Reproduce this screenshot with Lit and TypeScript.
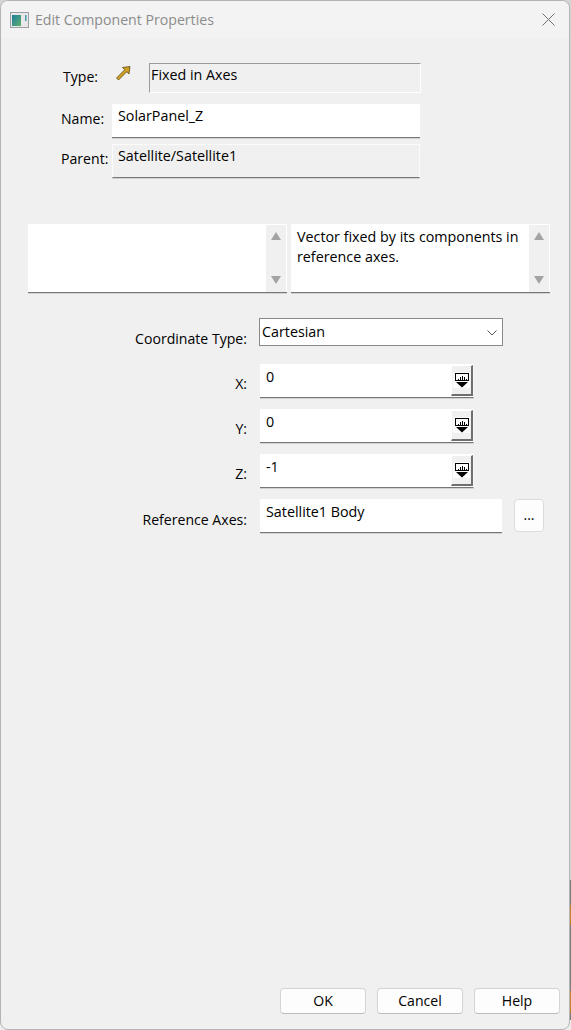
import { LitElement, html, css, svg } from "lit";
import { customElement } from "lit/decorators.js";

const spinIcon = html`<svg class="spin-icon" viewBox="0 0 17 16" width="17" height="16" shape-rendering="crispEdges">
  <rect x="0" y="0" width="17" height="16" fill="#ffffff" fill-opacity="0.75"/>
  ${svg`<path d="M2 1.5H15.5M2.5 1V8.5M15.5 1V8.5M2 8.5H16" stroke="#000" fill="none"/>
  <path d="M5.5 8V6.5M7.5 8V5M9.5 8V3.5M11.5 8V5M13.5 8V6.5" stroke="#000" fill="none"/>
  <path d="M3 10H15L9 15.5Z" fill="#000" shape-rendering="auto"/>`}
</svg>`;

const arrowIcon = html`<svg class="arrow" viewBox="0 0 16 17" width="16" height="17">
  <path d="M15 1.5L7.5 2.5L9.8 4.7L1.5 13L3.5 15L11.8 6.7L14 9Z" fill="#cfa024" stroke="#5f4a10" stroke-width="0.8"/>
</svg>`;

const appIcon = html`<svg class="app-icon" viewBox="0 0 19 16" width="19" height="16">
  <defs><linearGradient id="g" x1="0" y1="0" x2="1" y2="1"><stop offset="0" stop-color="#1f7ea0"/><stop offset="1" stop-color="#5fae6a"/></linearGradient></defs>
  <rect x="0.5" y="0.5" width="18" height="15" fill="#e8e8e8" stroke="#9aa0a6"/>
  <rect x="2" y="3" width="9" height="11" fill="url(#g)"/>
  <rect x="15" y="3" width="1.5" height="6" fill="#4a9bb0"/>
</svg>`;

const closeIcon = html`<svg viewBox="0 0 13 13" width="13" height="13" class="close">
  <path d="M0.5 0.5L12.5 12.5M12.5 0.5L0.5 12.5" stroke="#6f6f6f" stroke-width="1" fill="none"/>
</svg>`;

const chevron = html`<svg viewBox="0 0 10 6" width="10" height="6" class="chev">
  <path d="M0.5 0.5L5 5L9.5 0.5" stroke="#555" stroke-width="1" fill="none"/>
</svg>`;

const scrollbar = html`<div class="sb">
  <svg viewBox="0 0 10 8" width="10" height="8"><path d="M5 0L10 8H0Z" fill="#a3a3a3"/></svg>
  <svg viewBox="0 0 10 8" width="10" height="8"><path d="M0 0H10L5 8Z" fill="#a3a3a3"/></svg>
</div>`;

@customElement("app-root")
export class AppRoot extends LitElement {
  static styles = css`
    :host {
      display: block;
      width: 571px;
      height: 1030px;
      background: linear-gradient(
        to bottom,
        #d4d4d4 0 880px,
        #7a7a7a 880px 905px,
        #c8842a 905px 925px,
        #7a7a7a 925px 991px,
        #c8842a 991px 1013px,
        #7a7a7a 1013px 1020px,
        #eeeeee 1020px
      );
      font-family: "Open Sans", "Noto Sans", sans-serif;
      font-size: 14.1px;
      color: #000;
      overflow: hidden;
    }
    .window {
      box-sizing: border-box;
      width: 570px;
      height: 1030px;
      background: #f0f0f0;
      border: 1px solid #b4b4b4;
      border-radius: 8px;
      display: flex;
      flex-direction: column;
      overflow: hidden;
    }
    .title {
      height: 37px;
      flex: none;
      background: #f3f3f3;
      display: flex;
      align-items: center;
      padding: 0 14px 0 9px;
      color: #8c8c8c;
      font-size: 14.15px;
    }
    .app-icon { margin-right: 6px; }
    .close { margin-left: auto; }
    .content {
      flex: 1;
      display: flex;
      flex-direction: column;
      padding: 25px 0 15px 0;
    }
    .top {
      display: flex;
      flex-direction: column;
    }
    .row { display: flex; }
    .lbl { white-space: nowrap; }
    .type-row { height: 30px; padding-left: 62px; }
    .type-row .lbl { width: 52px; padding-top: 4px; }
    .arrow { margin-top: 2px; }
    .arrow-cell { width: 34px; flex: none; }
    .sunk {
      box-sizing: border-box;
      width: 272px;
      height: 30px;
      border: 1px solid #fff;
      border-top-color: #9a9a9a;
      border-left-color: #9a9a9a;
      padding-left: 1px;
      line-height: 21px;
      font-size: 14.3px;
    }
    .name-row { height: 34px; margin-top: 11px; padding-left: 60px; }
    .parent-row { height: 34px; margin-top: 6px; padding-left: 60px; }
    .name-row .lbl, .parent-row .lbl { width: 51px; padding-top: 5px; }
    .edit {
      box-sizing: border-box;
      height: 34px;
      background: #fff;
      border-bottom: 1px solid #777;
      box-shadow: 0 1px 0 #d2d2d2;
      padding-left: 6px;
      line-height: 24px;
      font-size: 14.3px;
    }
    .name-row .edit, .parent-row .edit { width: 308px; }
    .ro {
      background: #f0f0f0;
      border: 1px solid #fbfbfb;
      border-bottom-color: #777;
      padding-left: 5px;
      line-height: 22px;
    }
    .desc-row {
      display: flex;
      gap: 4px;
      margin-top: 46px;
      padding-left: 27px;
    }
    .desc {
      box-sizing: border-box;
      width: 259px;
      height: 69px;
      background: #fff;
      border-bottom: 1px solid #777;
      box-shadow: 0 1px 0 #d2d2d2;
      display: flex;
    }
    .desc-text {
      flex: 1;
      padding: 3px 0 0 6px;
      line-height: 20px;
      font-size: 14.3px;
    }
    .sb {
      box-sizing: border-box;
      width: 20px;
      height: 67px;
      margin: 1px 1px 0 0;
      background: #f0f0f0;
      display: flex;
      flex-direction: column;
      justify-content: space-between;
      align-items: center;
      padding: 7px 1px 8px 0;
    }
    .form {
      display: flex;
      flex-direction: column;
      margin-top: 25px;
    }
    .frow { display: flex; height: 28px; }
    .frow .lbl {
      width: 246px;
      flex: none;
      text-align: right;
      padding-top: 11px;
    }
    .select {
      box-sizing: border-box;
      width: 244px;
      height: 28px;
      margin-left: 12px;
      background: #fff;
      border: 1px solid #8a8a8a;
      display: flex;
      align-items: center;
      justify-content: space-between;
      padding: 0 5px 2px 2px;
      font-size: 14.3px;
    }
    .chev { margin-top: 3px; }
    .num {
      margin-top: 11px;
      height: 34px;
    }
    .num.first { margin-top: 18px; }
    .num .lbl { padding-top: 10px; }
    .num-field {
      box-sizing: border-box;
      width: 214px;
      height: 34px;
      margin-left: 13px;
      position: relative;
      background: #fff;
      border-bottom: 1px solid #777;
      box-shadow: 0 1px 0 #d2d2d2;
      border-right: 1px solid #f8f8f8;
      padding-left: 6px;
      line-height: 26px;
      font-size: 14.3px;
    }
    .spin {
      position: absolute;
      right: 0;
      top: 1px;
      box-sizing: border-box;
      width: 22px;
      height: 31px;
      background: #f0f0f0;
      border-top: 1px solid #fff;
      border-left: 1px solid #fff;
      border-right: 2px solid #6f6f6f;
      border-bottom: 2px solid #6f6f6f;
      display: flex;
      align-items: flex-start;
      justify-content: center;
      padding-top: 6px;
    }
    .ref-field { width: 242px; margin-left: 13px; line-height: 26px; }
    .ref { margin-top: 11px; height: 34px; }
    .ref .lbl { padding-top: 11px; }
    .dots {
      box-sizing: border-box;
      width: 30px;
      height: 33px;
      margin-left: 12px;
      background: #fdfdfd;
      border: 1px solid #dcdcdc;
      border-radius: 4px;
      display: flex;
      align-items: center;
      justify-content: center;
      padding-bottom: 2px;
    }
    .footer {
      margin-top: auto;
      display: flex;
      justify-content: flex-end;
      gap: 11px;
      padding-right: 9px;
    }
    .btn {
      box-sizing: border-box;
      width: 86px;
      height: 26px;
      background: #fdfdfd;
      border: 1px solid #d4d4d4;
      border-bottom-color: #bdbdbd;
      border-radius: 4px;
      display: flex;
      align-items: center;
      justify-content: center;
      padding-bottom: 1px;
    }
  `;

  render() {
    return html`<div class="window">
      <div class="title">${appIcon}<span>Edit Component Properties</span>${closeIcon}</div>
      <div class="content">
        <div class="top">
          <div class="row type-row">
            <div class="lbl">Type:</div>
            <div class="arrow-cell">${arrowIcon}</div>
            <div class="sunk">Fixed in Axes</div>
          </div>
          <div class="row name-row">
            <div class="lbl">Name:</div>
            <div class="edit">SolarPanel_Z</div>
          </div>
          <div class="row parent-row">
            <div class="lbl">Parent:</div>
            <div class="edit ro">Satellite/Satellite1</div>
          </div>
        </div>
        <div class="desc-row">
          <div class="desc"><div class="desc-text"></div>${scrollbar}</div>
          <div class="desc"><div class="desc-text">Vector fixed by its components in reference axes.</div>${scrollbar}</div>
        </div>
        <div class="form">
          <div class="frow">
            <div class="lbl">Coordinate Type:</div>
            <div class="select"><span>Cartesian</span>${chevron}</div>
          </div>
          ${["X", "Y", "Z"].map(
            (n, i) => html`<div class="frow num ${i === 0 ? "first" : ""}">
              <div class="lbl">${n}:</div>
              <div class="num-field">${n === "Z" ? "-1" : "0"}<div class="spin">${spinIcon}</div></div>
            </div>`
          )}
          <div class="frow ref">
            <div class="lbl">Reference Axes:</div>
            <div class="edit ref-field">Satellite1 Body</div>
            <div class="dots">...</div>
          </div>
        </div>
        <div class="footer">
          <div class="btn">OK</div>
          <div class="btn">Cancel</div>
          <div class="btn">Help</div>
        </div>
      </div>
    </div>`;
  }
}
